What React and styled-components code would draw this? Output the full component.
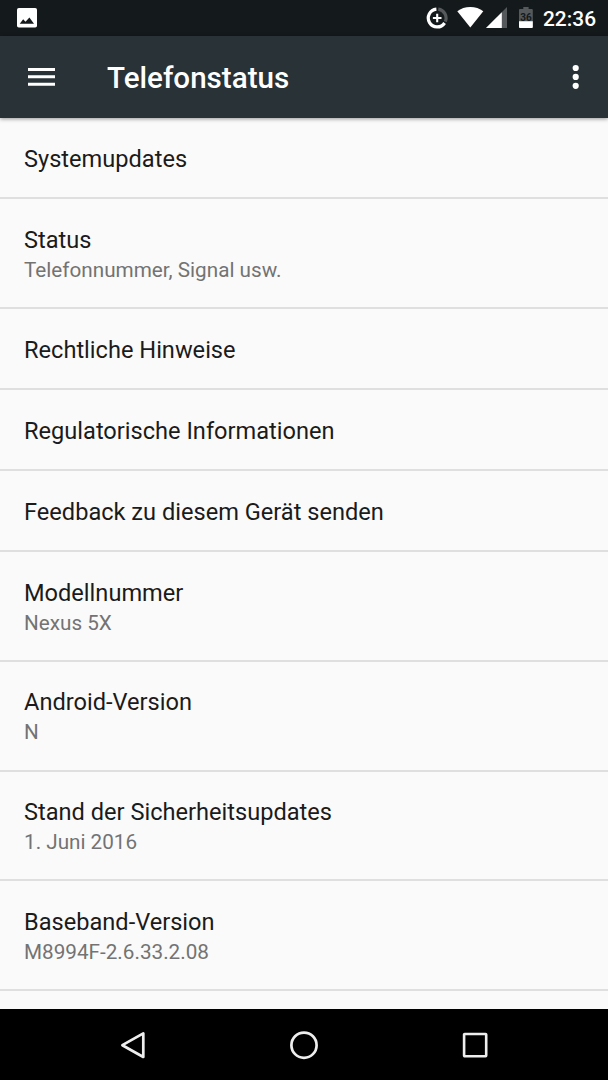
import React from 'react';
import styled, { createGlobalStyle } from 'styled-components';

const rows = [
  { title: 'Systemupdates', height: 81 },
  { title: 'Status', summary: 'Telefonnummer, Signal usw.', height: 110 },
  { title: 'Rechtliche Hinweise', height: 81 },
  { title: 'Regulatorische Informationen', height: 81 },
  { title: 'Feedback zu diesem Gerät senden', height: 81 },
  { title: 'Modellnummer', summary: 'Nexus 5X', height: 109.5 },
  { title: 'Android-Version', summary: 'N', height: 110 },
  { title: 'Stand der Sicherheitsupdates', summary: '1. Juni 2016', height: 109.5 },
  { title: 'Baseband-Version', summary: 'M8994F-2.6.33.2.08', height: 110 },
];

const ImageIcon = () => (
  <svg width="20" height="20" viewBox="0 0 20 20">
    <rect x="0" y="0" width="20" height="19.6" rx="1.8" fill="#fff" />
    <path d="M2.7 15.8 6.2 11.2 8.5 13.8 12.4 9.4 17 15.8Z" fill="#14191c" />
  </svg>
);

const DataSaverIcon = () => (
  <svg width="22" height="22" viewBox="0 0 22 22">
    <path d="M12.3 2.2A8.9 8.9 0 0 1 19.3 14.6" fill="none" stroke="#55595b" strokeWidth="3.2" />
    <path d="M10.4 2.2A8.9 8.9 0 1 0 18.6 16" fill="none" stroke="#fff" strokeWidth="3.2" />
    <path d="M11.2 6.7V15.3M6.9 11H15.5" stroke="#fff" strokeWidth="2.1" />
  </svg>
);

const WifiIcon = () => (
  <svg width="27" height="21" viewBox="0 0 27 21">
    <path d="M.3 4.3C3.8 1.5 8.4 0 13.3 0s9.5 1.5 13 4.3L13.3 20.6Z" fill="#fff" />
  </svg>
);

const SignalIcon = () => (
  <svg width="21" height="21" viewBox="0 0 21 21">
    <path d="M21 0V21H0Z" fill="#55595b" />
    <path d="M15.8 5.2V21H0Z" fill="#fff" />
  </svg>
);

const BatteryIcon = () => (
  <svg width="14" height="21" viewBox="0 0 14 21">
    <path d="M4.3 0H9.6V2H12.8Q13.8 2 13.8 3V20Q13.8 21 12.8 21H1Q0 21 0 20V3Q0 2 1 2H4.3Z" fill="#55595b" />
    <path d="M0 14.2H13.8V20Q13.8 21 12.8 21H1Q0 21 0 20Z" fill="#fff" />
    <text x="6.9" y="14" textAnchor="middle" fontFamily="Roboto, sans-serif" fontSize="10" fontWeight="700" fill="#14191c">36</text>
  </svg>
);

const MenuIcon = () => (
  <svg width="27" height="20" viewBox="0 0 27 20">
    <path d="M0 2.5H27M0 9.8H27M0 17.2H27" stroke="#fff" strokeWidth="2.9" />
  </svg>
);

const MoreIcon = () => (
  <svg width="8" height="26" viewBox="0 0 8 26">
    <circle cx="3.7" cy="4" r="3.1" fill="#fff" />
    <circle cx="3.7" cy="12.9" r="3.1" fill="#fff" />
    <circle cx="3.7" cy="21.8" r="3.1" fill="#fff" />
  </svg>
);

const BackIcon = () => (
  <svg width="28" height="30" viewBox="0 0 28 30">
    <path d="M3.4 15.2 24.3 3.3V27Z" fill="none" stroke="#eee" strokeWidth="2.7" strokeLinejoin="round" />
  </svg>
);

const HomeIcon = () => (
  <svg width="30" height="30" viewBox="0 0 30 30">
    <circle cx="15" cy="15.2" r="12.6" fill="none" stroke="#eee" strokeWidth="2.7" />
  </svg>
);

const RecentsIcon = () => (
  <svg width="30" height="30" viewBox="0 0 30 30">
    <rect x="4.1" y="4" width="22.1" height="22.2" rx="0.6" fill="none" stroke="#eee" strokeWidth="2.6" strokeLinejoin="round" />
  </svg>
);

export default function App() {
  return (
    <Screen>
      <GlobalStyle />
      <StatusBar>
        <ImageIcon />
        <StatusIcons>
          <DataSaverIcon />
          <WifiIcon />
          <SignalIcon />
          <BatteryIcon />
          <Clock>22:36</Clock>
        </StatusIcons>
      </StatusBar>
      <Toolbar>
        <MenuIcon />
        <ToolbarTitle>Telefonstatus</ToolbarTitle>
        <MoreIcon />
      </Toolbar>
      <List>
        {rows.map((row) => (
          <Row key={row.title} $height={row.height}>
            <Title>{row.title}</Title>
            {row.summary && <Summary>{row.summary}</Summary>}
          </Row>
        ))}
      </List>
      <NavBar>
        <BackIcon />
        <HomeIcon />
        <RecentsIcon />
      </NavBar>
    </Screen>
  );
}

const GlobalStyle = createGlobalStyle`
  body {
    margin: 0;
    background: #fafafa;
  }

  svg {
    display: block;
    flex-shrink: 0;
  }
`;

const Screen = styled.div`
  display: flex;
  flex-direction: column;
  width: 608px;
  height: 1080px;
  overflow: hidden;
  background: #fafafa;
  font-family: Roboto, sans-serif;
`;

const StatusBar = styled.div`
  display: flex;
  align-items: center;
  justify-content: space-between;
  box-sizing: border-box;
  flex: 0 0 35.5px;
  padding: 0 12px 0 17px;
  background: #14191c;
`;

const StatusIcons = styled.div`
  display: flex;
  align-items: center;

  svg + svg {
    margin-left: 2px;
  }

  svg:nth-child(2) {
    margin-left: 9px;
  }

  svg:nth-child(4) {
    margin-left: 12px;
  }
`;

const Clock = styled.span`
  width: 53px;
  margin-left: 10px;
  padding-top: 2px;
  color: #fff;
  font-size: 20.9px;
  font-weight: 500;
  line-height: 24px;
  white-space: nowrap;
`;

const Toolbar = styled.div`
  position: relative;
  display: flex;
  align-items: center;
  box-sizing: border-box;
  flex: 0 0 82.5px;
  padding: 0 28px;
  background: #283237;
  box-shadow: 0 1px 4px rgba(0, 0, 0, 0.4);
`;

const ToolbarTitle = styled.div`
  flex: 1;
  margin-left: 52px;
  padding-top: 2px;
  color: #fff;
  font-size: 29.6px;
  font-weight: 500;
  line-height: 36px;
`;

const List = styled.div`
  flex: 1;
  min-height: 0;
  overflow: hidden;
`;

const Row = styled.div`
  display: flex;
  flex-direction: column;
  justify-content: center;
  box-sizing: border-box;
  height: ${(props) => props.$height}px;
  padding: 3.6px 24px 0;
  border-bottom: 2px solid #dfdfdf;
`;

const Title = styled.div`
  color: #1b1b1b;
  font-size: 23.6px;
  line-height: 31px;
`;

const Summary = styled.div`
  color: #737373;
  font-size: 20.7px;
  line-height: 29px;
`;

const NavBar = styled.div`
  display: flex;
  align-items: center;
  justify-content: space-between;
  box-sizing: border-box;
  flex: 0 0 71px;
  padding: 0 118px 0 119px;
  background: #000;
`;
